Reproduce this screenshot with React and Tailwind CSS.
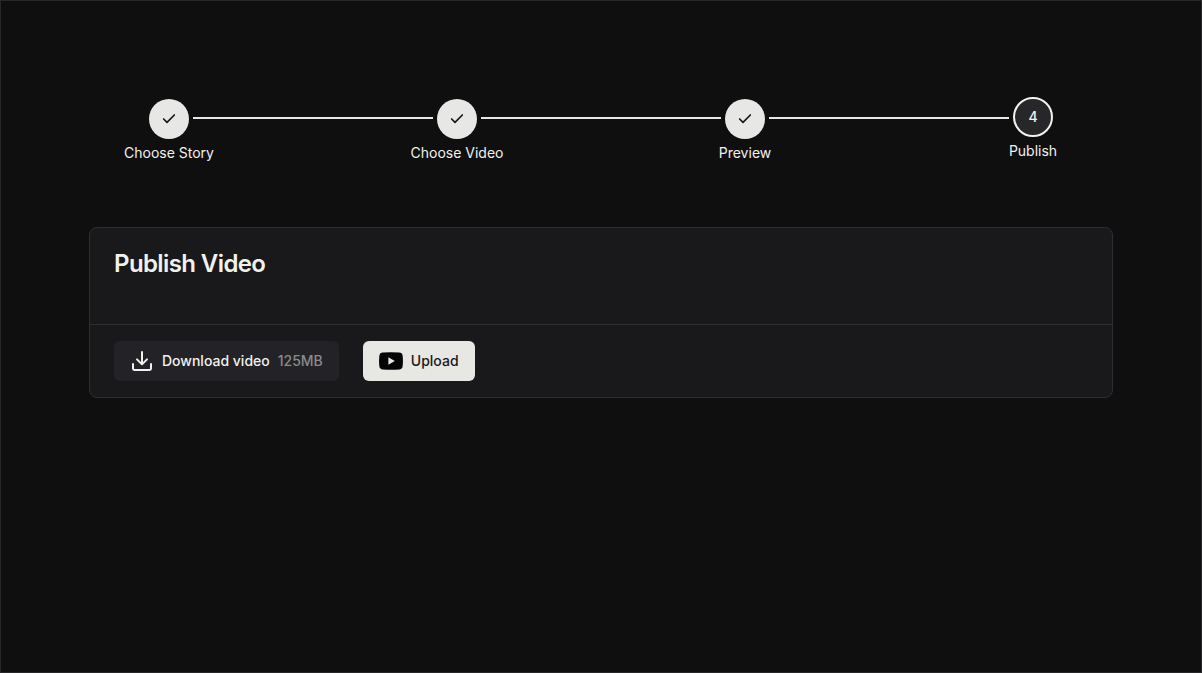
import { Check } from 'lucide-react'

const steps = [
  { label: 'Choose Story', done: true },
  { label: 'Choose Video', done: true },
  { label: 'Preview', done: true },
  { label: 'Publish', done: false },
]

function Connector({ visible }) {
  return <span className={`mt-5 h-0.5 flex-1 ${visible ? 'bg-[#e7e7e4]' : ''}`} />
}

function Step({ step, index }) {
  return (
    <li className="flex flex-col items-center gap-1" aria-current={step.done ? undefined : 'step'}>
      <div className="flex w-full items-start">
        <Connector visible={index > 0} />
        {step.done ? (
          <span className="mx-1 mt-0.5 flex size-10 items-center justify-center rounded-full bg-[#e7e7e5] text-[#18181b]">
            <Check size={16} strokeWidth={2.5} />
          </span>
        ) : (
          <span className="mx-1 flex size-10 items-center justify-center rounded-full border-2 border-[#f1f1ee] bg-[#27272a] text-sm font-medium">
            {index + 1}
          </span>
        )}
        <Connector visible={index < steps.length - 1} />
      </div>
      <span className="text-sm">{step.label}</span>
    </li>
  )
}

function DownloadIcon() {
  return (
    <svg
      width="24"
      height="24"
      viewBox="0 0 24 24"
      fill="none"
      stroke="currentColor"
      strokeWidth="2"
      strokeLinecap="round"
      strokeLinejoin="round"
      aria-hidden="true"
    >
      <path d="M12 3v12.2M7 10.4l5 5 5-5" />
      <path d="M3 15v4.6a1.4 1.4 0 0 0 1.4 1.4h15.2a1.4 1.4 0 0 0 1.4-1.4V15" />
    </svg>
  )
}

function YoutubeIcon() {
  return (
    <svg width="24" height="24" viewBox="0 0 24 24" aria-hidden="true">
      <path
        fill="#050505"
        d="M3.9 3.5Q12 2.9 20.1 3.5Q23.2 3.7 23.6 6.4Q24.3 12 23.6 17.6Q23.2 20.3 20.1 20.5Q12 21.1 3.9 20.5Q.8 20.3.4 17.6Q-.3 12 .4 6.4Q.8 3.7 3.9 3.5Z"
      />
      <path fill="#e7e7e4" d="M9.4 8.2v7.6l6.4-3.8z" />
    </svg>
  )
}

export default function App() {
  return (
    <div className="min-h-screen border border-[#27272a] bg-[#0f0f0f] px-6 pt-24 pb-16 font-['Inter',sans-serif] text-[#f1f1ee]">
      <ol className="mx-auto grid max-w-6xl grid-cols-4">
        {steps.map((step, index) => (
          <Step key={step.label} step={step} index={index} />
        ))}
      </ol>

      <main className="mx-auto mt-16 max-w-5xl rounded-lg border border-[#2e2e32] bg-[#19191b]">
        <header className="min-h-24 p-6">
          <h1 className="text-2xl leading-6 font-semibold tracking-tight">Publish Video</h1>
        </header>

        <div className="flex flex-wrap gap-6 border-t border-[#2e2e32] px-6 py-4">
          <button type="button" className="flex h-10 items-center gap-2 rounded-md bg-[#232327] px-4 text-sm font-medium">
            <DownloadIcon />
            Download video
            <span className="text-[#8b8b8b]">125MB</span>
          </button>
          <button type="button" className="flex h-10 items-center gap-2 rounded-md bg-[#e7e7e4] px-4 text-sm font-medium text-[#18181b]">
            <YoutubeIcon />
            Upload
          </button>
        </div>
      </main>
    </div>
  )
}
